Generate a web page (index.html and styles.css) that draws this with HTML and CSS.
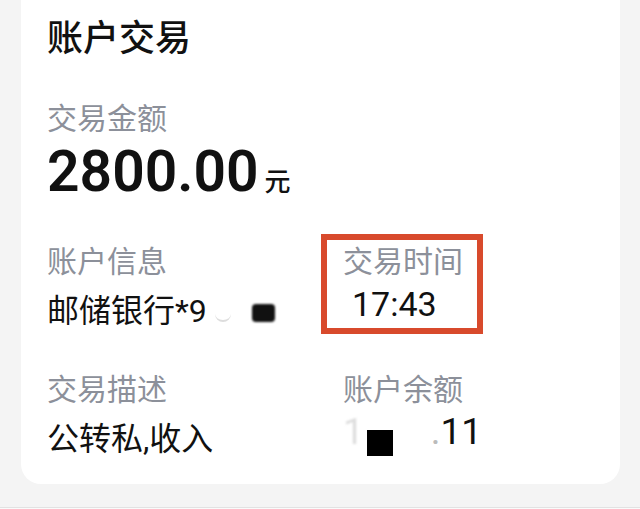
FILE: index.html
```html
<!DOCTYPE html>
<html lang="zh-CN">
<head>
  <meta charset="UTF-8">
  <meta name="viewport" content="width=device-width, initial-scale=1.0">
  <title>账户交易</title>
  <link rel="stylesheet" href="styles.css">
</head>
<body>
  <!-- 卡片 -->
  <div class="card">
    <h1 class="title">账户交易</h1>

    <div class="field">
      <div class="label">交易金额</div>
      <div class="amount">2800.00<span class="unit">元</span></div>
    </div>

    <div class="grid">
      <div class="field">
        <div class="label">账户信息</div>
        <div class="value">邮储银行*9<span class="smudge"></span><span class="blob"></span></div>
      </div>
      <div class="field marked">
        <div class="label">交易时间</div>
        <div class="value time">17:43</div>
      </div>
      <div class="field">
        <div class="label">交易描述</div>
        <div class="value">公转私,收入</div>
      </div>
      <div class="field">
        <div class="label">账户余额</div>
        <div class="value balance"><span class="faint">1</span><span class="block"></span><span class="dot">.</span>11</div>
      </div>
    </div>
  </div>

  <div class="bottom"></div>
</body>
</html>
```

FILE: styles.css
```css
body {
  margin: 0;
  background: #f4f4f4;
  font-family: Roboto, "Noto Sans CJK SC", sans-serif;
  color: #111;
  height: 509px;
  overflow: hidden;
}
.card {
  background: #fff;
  width: 599px;
  margin-left: 21px;
  padding: 18px 26px 26px;
  box-sizing: border-box;
  border-radius: 0 0 20px 20px;
}
.title {
  margin: 0 0 40px;
  font-size: 36px;
  font-weight: 500;
  line-height: 43px;
}
.label {
  font-size: 30px;
  line-height: 36px;
  color: #8c909a;
}
.amount {
  font-size: 57px;
  font-weight: 600;
  line-height: 68px;
  margin-top: 1px;
}
.unit {
  font-size: 26px;
  font-weight: 500;
  margin-left: 6px;
}
.grid {
  display: grid;
  grid-template-columns: 296px 1fr;
  row-gap: 42px;
  margin-top: 28px;
}
.value {
  font-size: 32px;
  line-height: 38px;
  margin-top: 12px;
}
.time {
  padding-left: 9px;
  font-size: 34px;
  margin-top: 5px;
}
.marked {
  position: relative;
}
/* moldura vermelha por cima */
.marked::after {
  content: "";
  position: absolute;
  left: -22px;
  top: -10px;
  width: 162px;
  height: 100px;
  border: 6px solid #d84a2c;
  box-sizing: border-box;
}
.smudge {
  display: inline-block;
  width: 16px;
  height: 10px;
  margin-left: 8px;
  border-bottom: 2px solid #ddd;
  border-radius: 0 0 8px 8px;
}
.blob {
  display: inline-block;
  width: 23px;
  height: 18px;
  margin-left: 21px;
  background: #111;
  border-radius: 4px;
  filter: blur(1px);
}
.balance {
  font-size: 37px;
  margin-top: 5px;
}
.faint {
  color: #ddd;
  filter: blur(1px);
}
.block {
  display: inline-block;
  width: 26px;
  height: 26px;
  margin-left: 3px;
  background: #000;
  vertical-align: -12px;
}
.dot {
  margin-left: 38px;
  color: #bbb;
}
.bottom {
  margin-top: 23px;
  border-top: 1px solid #e2e2e2;
  height: 3px;
  background: #fafafa;
}
```
